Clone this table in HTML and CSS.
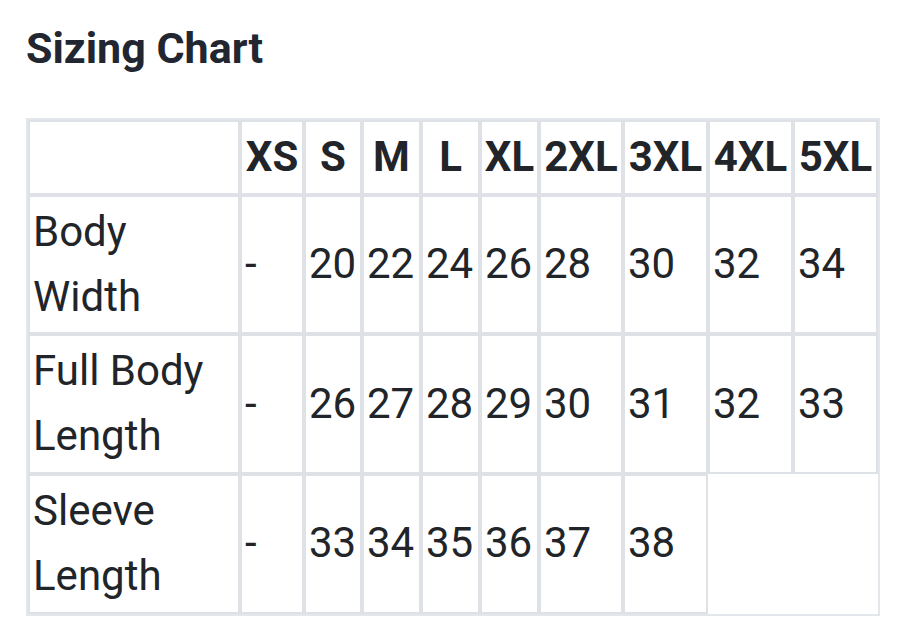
FILE: index.html
```html
<!DOCTYPE html>
<html lang="en">
<head>
<meta charset="utf-8">
<title>Sizing Chart</title>
<link rel="stylesheet" href="styles.css">
</head>
<body>
<div class="page">
  <h2 class="title">Sizing Chart</h2>
  <table class="chart">
    <thead>
      <tr>
        <th class="c-label"></th>
        <th class="c-xs">XS</th>
        <th class="c-s">S</th>
        <th class="c-m">M</th>
        <th class="c-l">L</th>
        <th class="c-xl">XL</th>
        <th class="c-2xl">2XL</th>
        <th class="c-3xl">3XL</th>
        <th class="c-4xl">4XL</th>
        <th class="c-5xl">5XL</th>
      </tr>
    </thead>
    <tbody>
      <tr>
        <td class="label">Body Width</td>
        <td>-</td><td>20</td><td>22</td><td>24</td><td>26</td><td>28</td><td>30</td><td>32</td><td>34</td>
      </tr>
      <tr>
        <td class="label">Full Body Length</td>
        <td>-</td><td>26</td><td>27</td><td>28</td><td>29</td><td>30</td><td>31</td><td>32</td><td>33</td>
      </tr>
      <tr>
        <td class="label">Sleeve Length</td>
        <td>-</td><td>33</td><td>34</td><td>35</td><td>36</td><td>37</td><td>38</td>
      </tr>
    </tbody>
  </table>
</div>
</body>
</html>
```

FILE: styles.css
```css
html, body {
  margin: 0;
  padding: 0;
  background: #ffffff;
}

body {
  font-family: Roboto, "Liberation Sans", Arial, sans-serif;
  color: #212529;
}

.page {
  padding: 22px 24px 0 26px;
}

.title {
  margin: 0 0 44px 0;
  font-size: 43px;
  line-height: 52px;
  font-weight: 700;
  color: #222631;
}

.chart {
  width: 854px;
  table-layout: fixed;
  border-collapse: separate;
  border-spacing: 0;
  border: 2px solid #e3e6ea;
  font-size: 42px;
  line-height: 64.8px;
}

.chart th,
.chart td {
  box-sizing: border-box;
  border: 2px solid #dee2e6;
  padding: 3px;
  text-align: left;
  vertical-align: middle;
}

.chart th {
  font-weight: 700;
  text-align: center;
  padding: 3px 1px;
}

.chart td {
  font-weight: 400;
}

.c-label { width: 212px; }
.c-xs { width: 64px; }
.c-s { width: 58px; }
.c-m { width: 59px; }
.c-l { width: 59px; }
.c-xl { width: 59px; }
.c-2xl { width: 84px; }
.c-3xl { width: 85px; }
.c-4xl { width: 85px; }
.c-5xl { width: 85px; }
```
